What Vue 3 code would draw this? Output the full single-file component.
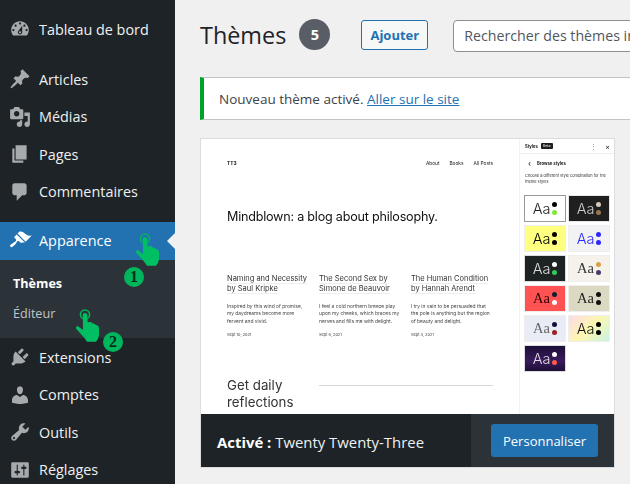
<script setup>
const icons = {
  dash: 'M3.76 16h12.48c1.1-1.37 1.76-3.11 1.76-5 0-4.42-3.58-8-8-8s-8 3.58-8 8c0 1.89.66 3.63 1.76 5zM10 4c.55 0 1 .45 1 1s-.45 1-1 1-1-.45-1-1 .45-1 1-1zM6 6c.55 0 1 .45 1 1s-.45 1-1 1-1-.45-1-1 .45-1 1-1zm8 0c.55 0 1 .45 1 1s-.45 1-1 1-1-.45-1-1 .45-1 1-1zm-5.37 5.55L12 7v6c0 1.1-.9 2-2 2s-2-.9-2-2c0-.57.24-1.08.63-1.45zM4 10c.55 0 1 .45 1 1s-.45 1-1 1-1-.45-1-1 .45-1 1-1zm12 0c.55 0 1 .45 1 1s-.45 1-1 1-1-.45-1-1 .45-1 1-1zm-5 3c0-.55-.45-1-1-1s-1 .45-1 1 .45 1 1 1 1-.45 1-1z',
  post: 'M10.44 3.02l1.82-1.82 6.36 6.35-1.83 1.82c-1.05-.68-2.48-.57-3.41.36l-.75.75c-.92.93-1.04 2.35-.35 3.41l-1.83 1.82-2.41-2.41-2.8 2.79c-.42.42-3.38 2.71-3.8 2.29s1.86-3.39 2.28-3.81l2.79-2.79L4.1 9.36l1.83-1.82c1.05.69 2.48.57 3.4-.36l.75-.75c.93-.92 1.05-2.35.36-3.41z',
  media: 'M13 11V4c0-.55-.45-1-1-1h-1.67L9 1H5L3.67 3H2c-.55 0-1 .45-1 1v7c0 .55.45 1 1 1h10c.55 0 1-.45 1-1zM7 4.5c1.38 0 2.5 1.12 2.5 2.5S8.38 9.5 7 9.5 4.5 8.38 4.5 7 5.62 4.5 7 4.5zM14 6h5v10.5c0 1.38-1.12 2.5-2.5 2.5S14 17.88 14 16.5s1.12-2.5 2.5-2.5c.17 0 .34.02.5.05V9h-3V6zm-4 8.05V13h2v3.5c0 1.38-1.12 2.5-2.5 2.5S7 17.88 7 16.5 8.12 14 9.5 14c.17 0 .34.02.5.05z',
  page: 'M6 15V2h10v13H6zm-1 1h8v2H3V5h2v11z',
  comment: 'M5 2h9c1.1 0 2 .9 2 2v7c0 1.1-.9 2-2 2h-2l-5 5v-5H5c-1.1 0-2-.9-2-2V4c0-1.1.9-2 2-2z',
  brush: 'M14.48 11.06L7.41 3.99l1.5-1.5c.5-.56 2.3-.47 3.51.32 1.21.8 1.43 1.28 2.91 2.1 1.18.64 2.45 1.26 4.45.85zm-.71.71L6.7 4.7 4.93 6.47c-.39.39-.39 1.02 0 1.41l1.06 1.06c.39.39.39 1.03 0 1.42-.6.6-1.43 1.11-2.21 1.69-.35.26-.7.53-1.01.84C1.43 13.23.4 14.65 1.25 15.5c.86.85 2.27-.19 3.61-1.53.31-.31.58-.66.85-1.02.57-.78 1.08-1.61 1.69-2.21.39-.39 1.02-.39 1.41 0l1.06 1.06c.39.39 1.02.39 1.41 0z',
  plug: 'M13.11 4.36L9.87 7.6 8 5.73l3.24-3.24c.35-.34 1.05-.2 1.56.32.52.51.66 1.21.31 1.55zm-8 1.77l.91-1.12 9.01 9.01-1.19.84c-.71.71-2.63 1.16-3.82 1.16H6.14L4.9 17.26c-.59.59-1.54.59-2.12 0-.59-.58-.59-1.53 0-2.12l1.24-1.24v-3.88c0-1.13.4-3.19 1.09-3.89zm7.26 3.97l3.24-3.24c.34-.35 1.04-.21 1.55.31.52.51.66 1.21.31 1.55l-3.24 3.25z',
  user: 'M10 9.25c-2.27 0-2.73-3.44-2.73-3.44C7 4.02 7.82 2 9.97 2c2.16 0 2.98 2.02 2.71 3.81 0 0-.41 3.44-2.68 3.44zm0 2.57L12.72 10c2.39 0 4.52 2.33 4.52 4.53v2.49s-3.65 1.13-7.24 1.13c-3.65 0-7.24-1.13-7.24-1.13v-2.49c0-2.25 1.94-4.48 4.47-4.48z',
  tools: 'M16.68 9.77c-1.34 1.34-3.3 1.67-4.95.99l-5.41 6.52c-.99.99-2.59.99-3.58 0s-.99-2.59 0-3.57l6.52-5.42c-.68-1.65-.35-3.61.99-4.95 1.28-1.28 3.12-1.62 4.72-1.06l-2.89 2.89 2.82 2.82 2.86-2.87c.53 1.58.18 3.39-1.08 4.65zM3.81 16.21c.4.39 1.04.39 1.43 0 .4-.4.4-1.04 0-1.43-.39-.4-1.03-.4-1.43 0-.39.39-.39 1.03 0 1.43z',
  settings: 'M18 16V4c0-.55-.45-1-1-1H3c-.55 0-1 .45-1 1v12c0 .55.45 1 1 1h14c.55 0 1-.45 1-1zM8 11h1c.55 0 1 .45 1 1s-.45 1-1 1H8v1.5c0 .28-.22.5-.5.5s-.5-.22-.5-.5V13H6c-.55 0-1-.45-1-1s.45-1 1-1h1V5.5c0-.28.22-.5.5-.5s.5.22.5.5V11zm5-2h-1c-.55 0-1-.45-1-1s.45-1 1-1h1V5.5c0-.28.22-.5.5-.5s.5.22.5.5V7h1c.55 0 1 .45 1 1s-.45 1-1 1h-1v5.5c0 .28-.22.5-.5.5s-.5-.22-.5-.5V9z'
}
const handPath = 'M7.8 6.5C7.8 4.8 12.2 4.8 12.2 6.5L12.6 14.2L15 14Q17 13.6 17.5 15.5Q20 15 20.6 17Q23.6 17 24 20L24 27Q23.6 31 21 33.7L12 33.7L9 29.5L1 20.5Q0.4 18 3 18.3L8 22Z'
const top = [{ i: 'dash', t: 'Tableau de bord' }]
const group1 = [
  { i: 'post', t: 'Articles' },
  { i: 'media', t: 'Médias' },
  { i: 'page', t: 'Pages' },
  { i: 'comment', t: 'Commentaires' }
]
const group2 = [
  { i: 'plug', t: 'Extensions' },
  { i: 'user', t: 'Comptes' },
  { i: 'tools', t: 'Outils' },
  { i: 'settings', t: 'Réglages' }
]
const posts = [
  { h: ['Naming and Necessity', 'by Saul Kripke'], b: ['Inspired by this wind of promise,', 'my daydreams become more', 'fervent and vivid.'], d: 'Sept 10, 2021' },
  { h: ['The Second Sex by', 'Simone de Beauvoir'], b: ['I feel a cold northern breeze play', 'upon my cheeks, which braces my', 'nerves and fills me with delight.'], d: 'Sept 6, 2021' },
  { h: ['The Human Condition', 'by Hannah Arendt'], b: ['I try in vain to be persuaded that', 'the pole is anything but the region', 'of beauty and delight.'], d: 'Sept 4, 2021' }
]
const swatches = [
  { bg: '#ffffff', fg: '#222', a: '#000', b: '#7fe838', line: '#999', font: 'sans' },
  { bg: '#1f1f1f', fg: '#ccc', a: '#d8c8b8', b: '#94784f', line: '#e8e8e8', font: 'sans' },
  { bg: '#ffff80', fg: '#000', a: '#000', b: '#000', line: '#eee', font: 'sans' },
  { bg: '#f2f2f4', fg: '#2a2aff', a: '#2a2aff', b: '#2a2aff', line: '#eee', font: 'sans' },
  { bg: '#1d2323', fg: '#ddd', a: '#fff', b: '#34c759', line: '#ddd', font: 'sans' },
  { bg: '#f5f2ec', fg: '#333', a: '#d9a24a', b: '#4a3a6a', line: '#eee', font: 'serif' },
  { bg: '#ff5252', fg: '#300', a: '#10202c', b: '#fff', line: '#eee', font: 'serif' },
  { bg: '#dcd9c2', fg: '#222', a: '#111', b: '#111', line: '#eee', font: 'serif' },
  { bg: '#e9ebf5', fg: '#666', a: '#101040', b: '#a02020', line: '#eee', font: 'serif' },
  { bg: 'linear-gradient(135deg,#ffd9e8,#fdf7b0 50%,#c9f3e4)', fg: '#111', a: '#000', b: '#000', line: '#eee', font: 'sans' },
  { bg: 'linear-gradient(#1c1038,#3a1a5c 60%,#1c1038)', fg: '#ddd', a: '#fff', b: '#ff5a4a', line: '#ddd', font: 'sans' }
]
</script>

<template>
  <div class="page">
    <aside class="side">
      <nav class="group first">
        <a v-for="m in top" :key="m.t" class="item">
          <svg class="ico" viewBox="0 0 20 20"><path :d="icons[m.i]" /></svg>{{ m.t }}
        </a>
      </nav>
      <nav class="group sep">
        <a v-for="m in group1" :key="m.t" class="item">
          <svg class="ico" viewBox="0 0 20 20"><path :d="icons[m.i]" /></svg>{{ m.t }}
        </a>
      </nav>
      <nav class="group sep2">
        <a class="item current">
          <svg class="ico" viewBox="0 0 20 20"><path :d="icons.brush" /></svg>Apparence
          <span class="arrow"></span>
          <svg class="hand hand1" viewBox="0 0 26 36">
            <circle cx="10" cy="6.5" r="4.6" />
            <path :d="handPath" />
          </svg>
          <span class="num num1">1</span>
        </a>
        <div class="sub">
          <a class="subitem strong">Thèmes</a>
          <a class="subitem">Éditeur</a>
          <svg class="hand hand2" viewBox="0 0 26 36">
            <circle cx="10" cy="6.5" r="4.6" />
            <path :d="handPath" />
          </svg>
          <span class="num num2">2</span>
        </div>
      </nav>
      <nav class="group">
        <a v-for="m in group2" :key="m.t" class="item">
          <svg class="ico" viewBox="0 0 20 20"><path :d="icons[m.i]" /></svg>{{ m.t }}
        </a>
      </nav>
    </aside>

    <main class="main">
      <header class="head">
        <h1>Thèmes</h1>
        <span class="count">5</span>
        <button class="add">Ajouter</button>
        <div class="search">Rechercher des thèmes installés…</div>
      </header>
      <div class="notice">Nouveau thème activé. <a>Aller sur le site</a></div>

      <section class="card">
        <div class="shot">
          <div class="site">
            <div class="site-top"><b>TT3</b><span class="links"><i>About</i><i>Books</i><i>All Posts</i></span></div>
            <div class="tagline">Mindblown: a blog about philosophy.</div>
            <div class="cols">
              <article v-for="p in posts" :key="p.d">
                <div class="ptitle"><div v-for="l in p.h" :key="l"><span>{{ l }}</span></div></div>
                <div class="pbody"><div v-for="l in p.b" :key="l">{{ l }}</div></div>
                <div class="pdate">{{ p.d }}</div>
              </article>
            </div>
            <div class="daily">
              <div class="daily-t">Get daily<br />reflections</div>
              <div class="rule"></div>
            </div>
          </div>
          <div class="styles">
            <div class="st-head"><b>Styles</b><span class="beta">Beta</span><span class="dots">⋮</span><span class="x">×</span></div>
            <div class="st-browse"><span class="chev">‹</span><b>Browse styles</b></div>
            <p class="st-desc">Choose a different style combination for the theme styles</p>
            <div class="st-grid">
              <div v-for="(s, idx) in swatches" :key="idx" class="sw" :style="{ background: s.bg, outlineColor: s.line }">
                <span class="aa" :class="s.font" :style="{ color: s.fg }">Aa</span>
                <span class="dots2">
                  <i :style="{ background: s.a }"></i>
                  <i :style="{ background: s.b }"></i>
                </span>
              </div>
            </div>
          </div>
        </div>
        <div class="bar">
          <div class="bar-name"><b>Activé :</b> Twenty Twenty-Three</div>
          <div class="bar-act"><button class="custom">Personnaliser</button></div>
        </div>
      </section>
    </main>
  </div>
</template>

<style>
html, body { margin: 0; background: #f0f0f1; }
</style>

<style scoped>
.page {
  width: 630px; height: 484px; display: flex; overflow: hidden;
  font-family: "Open Sans", "Noto Sans", sans-serif; background: #f0f0f1;
}
.side { width: 175px; flex: none; background: #1d2327; color: #f0f0f1; }
.group.first { padding-top: 10.5px; }
.group.sep { padding-top: 12.6px; }
.group.sep2 { padding-top: 11.9px; }
.item {
  position: relative; display: flex; align-items: center; height: 37.5px;
  font-size: 14.4px; color: #f0f0f1; box-sizing: border-box;
}
.ico { width: 22px; height: 22px; margin: 0 8px 0 9px; fill: #a7aaad; flex: none; }
.current { background: #2271b1; color: #fff; padding-bottom: 1px; }
.current .ico { fill: #fff; width: 23px; height: 23px; margin: 0 7px 0 9px; }
.arrow {
  position: absolute; right: 0; top: 50%; margin-top: -8px;
  border: 8px solid transparent; border-right-color: #f0f0f1; border-left: 0;
}
.sub { position: relative; background: #2c3338; height: 78.4px; padding-top: 9px; box-sizing: border-box; }
.subitem { display: block; height: 30px; line-height: 30px; padding-left: 13px; font-size: 12.6px; color: #c3c4c7; }
.subitem.strong { color: #fff; font-weight: 700; }
.hand { position: absolute; z-index: 2; width: 26px; height: 36px; fill: #00bf63; }
.hand circle { fill: none; stroke: #00b65c; stroke-width: 1.5; }
.hand1 { left: 135px; top: 10px; }
.hand2 { left: 75px; top: 48px; }
.num {
  position: absolute; z-index: 2; width: 20px; height: 20px; border-radius: 50%;
  background: #00b65c; color: #07301c; text-align: center;
  font: 700 16px/20px "Liberation Serif", serif;
}
.num1 { left: 124px; top: 45px; }
.num2 { left: 103px; top: 72px; }

.main { flex: 1; min-width: 0; padding: 0 0 0 25px; color: #3c434a; }
.head { display: flex; align-items: flex-start; height: 77px; box-sizing: border-box; padding-top: 19px; }
h1 { margin: 0; font-size: 23.4px; font-weight: 400; color: #1d2327; line-height: 32px; flex: none; }
.count {
  width: 31px; height: 31px; flex: none; border-radius: 50%; background: #595d66; color: #fff;
  text-align: center; font-size: 14.5px; font-weight: 700; line-height: 31px; margin-left: 13px;
}
.add {
  margin-left: 31px; margin-top: 1px; width: 67px; height: 30px; box-sizing: border-box; flex: none;
  border: 1px solid #2271b1; border-radius: 3px; background: #f6f7f7; color: #2271b1;
  font: 700 13px "Open Sans", sans-serif; padding: 0;
}
.search {
  margin-left: 25px; margin-top: 1px; width: 250px; flex: none; height: 32px; box-sizing: border-box;
  border: 1px solid #8c8f94; border-radius: 4px; background: #fff; color: #50575e;
  font-size: 14.2px; line-height: 30px; padding-left: 10px; white-space: nowrap;
}
.notice {
  height: 43px; box-sizing: border-box; background: #fff; border: 1px solid #c3c4c7; border-left: 4px solid #00a32a;
  border-right: 0; font-size: 13.5px; line-height: 42px; padding-left: 15px; color: #3c434a;
}
.notice a { color: #2271b1; text-decoration: underline; }

.card { margin-top: 18px; width: 415px; height: 330px; position: relative; background: #fff; border: 1px solid #dcdcde; box-sizing: border-box; display: flex; flex-direction: column; }
.shot { flex: 1; display: flex; overflow: hidden; min-height: 0; filter: blur(.3px); }
.site { width: 319px; flex: none; box-sizing: border-box; padding: 21px 0 0 26px; font-family: Inter, sans-serif; color: #111; border-right: 1px solid #f2f2f2; }
.site-top { display: flex; justify-content: space-between; padding-right: 26px; font-size: 4.8px; line-height: 6px; }
.links { display: flex; gap: 10px; }
.links i { font-style: normal; }
.tagline { margin-top: 42px; font-size: 12.6px; line-height: 18px; letter-spacing: -.22px; }
.cols { display: flex; margin-top: 48px; }
.cols article { width: 92px; flex: none; }
.ptitle { font-size: 7.5px; line-height: 10.3px; color: #333; }
.ptitle span { border-bottom: 1px solid #eee; }
.pbody { margin-top: 8px; font-size: 4.9px; line-height: 7.7px; color: #444; }
.pdate { margin-top: 6px; font-size: 3.9px; line-height: 6px; color: #444; }
.daily { display: flex; margin-top: 39px; }
.daily-t { width: 92px; font-size: 13.3px; line-height: 17px; color: #333; }
.rule { width: 174px; height: 1px; background: #d8d8d8; margin-top: 8px; }

.styles { flex: 1; font-family: Inter, sans-serif; color: #222; font-size: 4.2px; }
.st-head { height: 14px; display: flex; align-items: center; padding: 0 4px 0 5px; border-bottom: 1px solid #eee; }
.st-head b { font-size: 4.2px; }
.beta { background: #1e1e1e; color: #fff; padding: 1px 2px; font-size: 3.6px; margin-left: 3px; border-radius: 1px; }
.dots { margin-left: auto; font-size: 7px; color: #888; }
.x { margin-left: 8px; font-size: 7px; line-height: 7px; }
.st-browse { display: flex; align-items: center; gap: 6px; padding: 5px 0 0 8px; height: 8px; }
.chev { font-size: 8px; line-height: 8px; }
.st-desc { margin: 6px 4px 0 5px; font-size: 3.9px; line-height: 6px; color: #333; }
.st-grid { display: grid; grid-template-columns: 40px 40px; gap: 5px 4px; margin: 11px 0 0 5px; }
.sw { height: 25px; display: flex; align-items: center; justify-content: center; gap: 2px; outline: 1px solid #eee; box-sizing: border-box; }
.aa { font-size: 14.5px; line-height: 15px; }
.aa.sans { font-family: Inter, sans-serif; font-weight: 300; }
.aa.serif { font-family: "Liberation Serif", serif; }
.dots2 { display: flex; flex-direction: column; gap: 3px; }
.dots2 i { display: block; width: 5px; height: 5px; border-radius: 50%; }

.bar { height: 53px; flex: none; display: flex; background: #1d2327; color: #f0f0f1; }
.bar-name { width: 270px; box-sizing: border-box; padding-left: 16px; font-size: 14.9px; line-height: 56px; white-space: nowrap; }
.bar-name b { font-weight: 700; color: #fff; }
.bar-act { flex: 1; background: #2c3338; display: flex; align-items: center; padding-left: 20px; }
.custom { width: 107px; height: 33px; background: #2271b1; color: #fff; border: 0; border-radius: 3px; font: 400 13px "Open Sans", sans-serif; padding: 0; }
</style>
